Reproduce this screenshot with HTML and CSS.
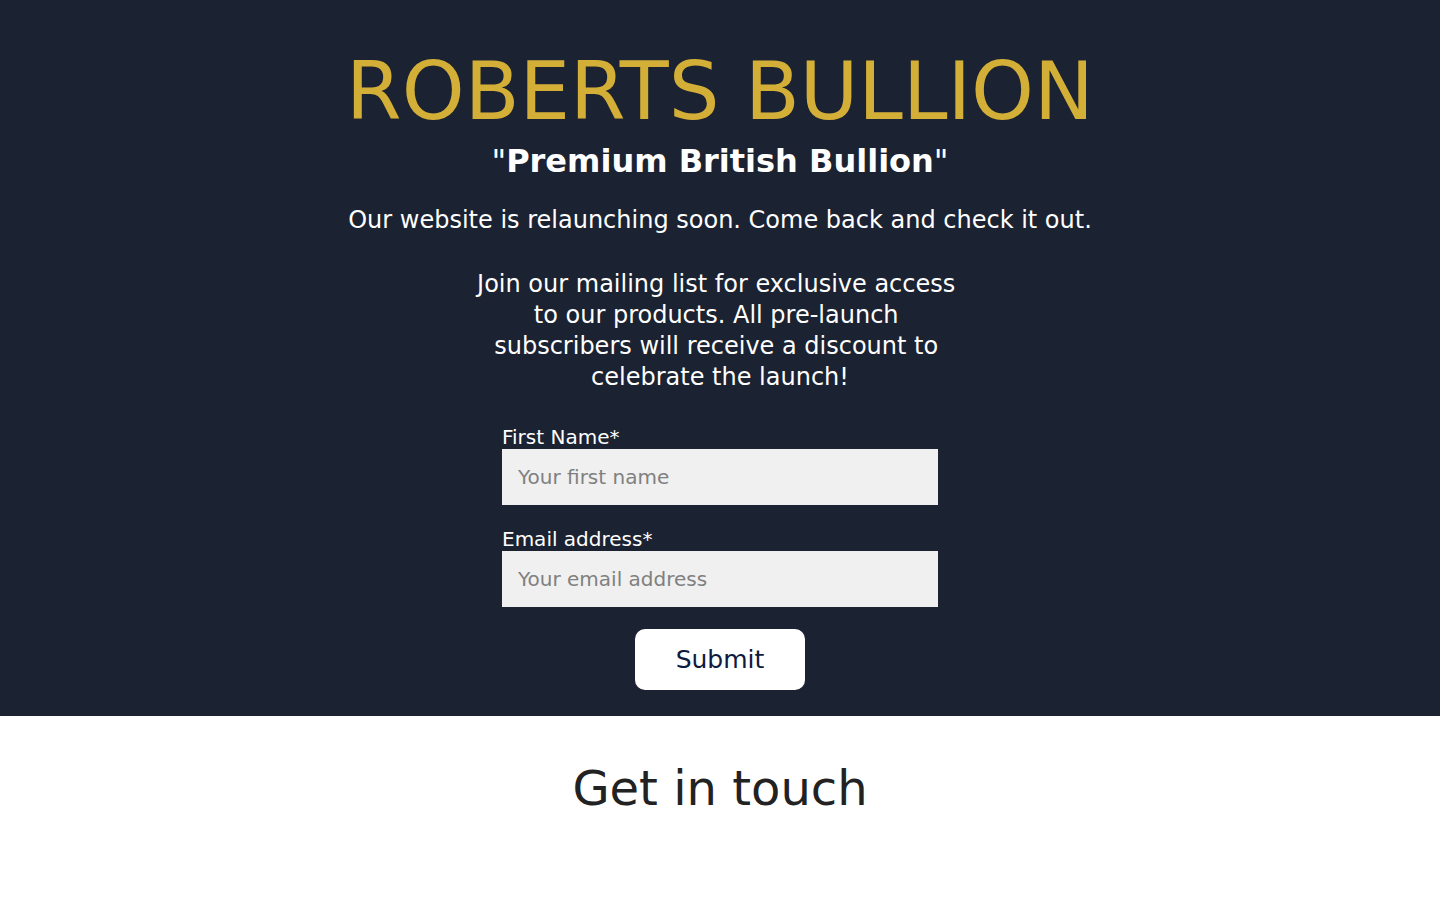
FILE: index.html
```html
<!DOCTYPE html>
<html lang="en">
<head>
<meta charset="utf-8">
<title>Roberts Bullion</title>
<link rel="stylesheet" href="styles.css">
</head>
<body>
<section class="hero">
  <h1 class="brand">ROBERTS BULLION</h1>
  <h2 class="tagline">"<strong>Premium British Bullion</strong>"</h2>
  <p class="lead">Our website is relaunching soon. Come back and check it out.</p>
  <p class="pitch">Join our mailing list for exclusive access to our products. All pre-launch subscribers will receive a discount to celebrate the launch!</p>
  <form class="signup">
    <label class="field">
      <span class="field-label">First Name*</span>
      <input class="field-input" type="text" placeholder="Your first name">
    </label>
    <label class="field">
      <span class="field-label">Email address*</span>
      <input class="field-input" type="email" placeholder="Your email address">
    </label>
    <button class="submit" type="button">Submit</button>
  </form>
</section>
<section class="contact">
  <h2 class="contact-title">Get in touch</h2>
</section>
</body>
</html>
```
FILE: styles.css
```css
* { box-sizing: border-box; }
html, body { margin: 0; padding: 0; }
body {
  font-family: "DejaVu Sans", sans-serif;
  background: #ffffff;
  color: #222;
}
.hero {
  background: #1b2231;
  color: #ffffff;
  text-align: center;
  padding: 44px 20px 26px;
  display: flex;
  flex-direction: column;
  align-items: center;
}
.brand {
  margin: 0;
  font-size: 80px;
  font-weight: normal;
  color: #d4af37;
  line-height: 1.2;
}
.tagline {
  margin: 1px 0 0;
  font-size: 32px;
  font-weight: normal;
  line-height: 1.3;
}
.tagline strong { font-weight: bold; }
.lead {
  margin: 22px 0 0;
  font-size: 24px;
  line-height: 1.3;
}
.pitch {
  margin: 33px 0 0;
  font-size: 24px;
  line-height: 31px;
  max-width: 500px;
  white-space: break-spaces;
}
.signup {
  margin-top: 32px;
  width: 436px;
  display: flex;
  flex-direction: column;
  align-items: stretch;
  text-align: left;
}
.field {
  display: flex;
  flex-direction: column;
  margin-bottom: 22px;
}
.field-label {
  font-size: 20px;
  line-height: 24px;
}
.field-input {
  height: 56px;
  border: none;
  background: #f0f0f0;
  padding: 0 16px;
  font-family: "DejaVu Sans", sans-serif;
  font-size: 20px;
  color: #333;
}
.field-input::placeholder { color: #808080; }
.submit {
  align-self: center;
  width: 170px;
  height: 61px;
  border: none;
  border-radius: 10px;
  background: #ffffff;
  color: #0d1b3e;
  font-family: "DejaVu Sans", sans-serif;
  font-size: 25px;
}
.contact {
  text-align: center;
  padding: 44px 0 60px;
}
.contact-title {
  margin: 0;
  font-size: 48px;
  font-weight: normal;
  color: #222;
}
```
